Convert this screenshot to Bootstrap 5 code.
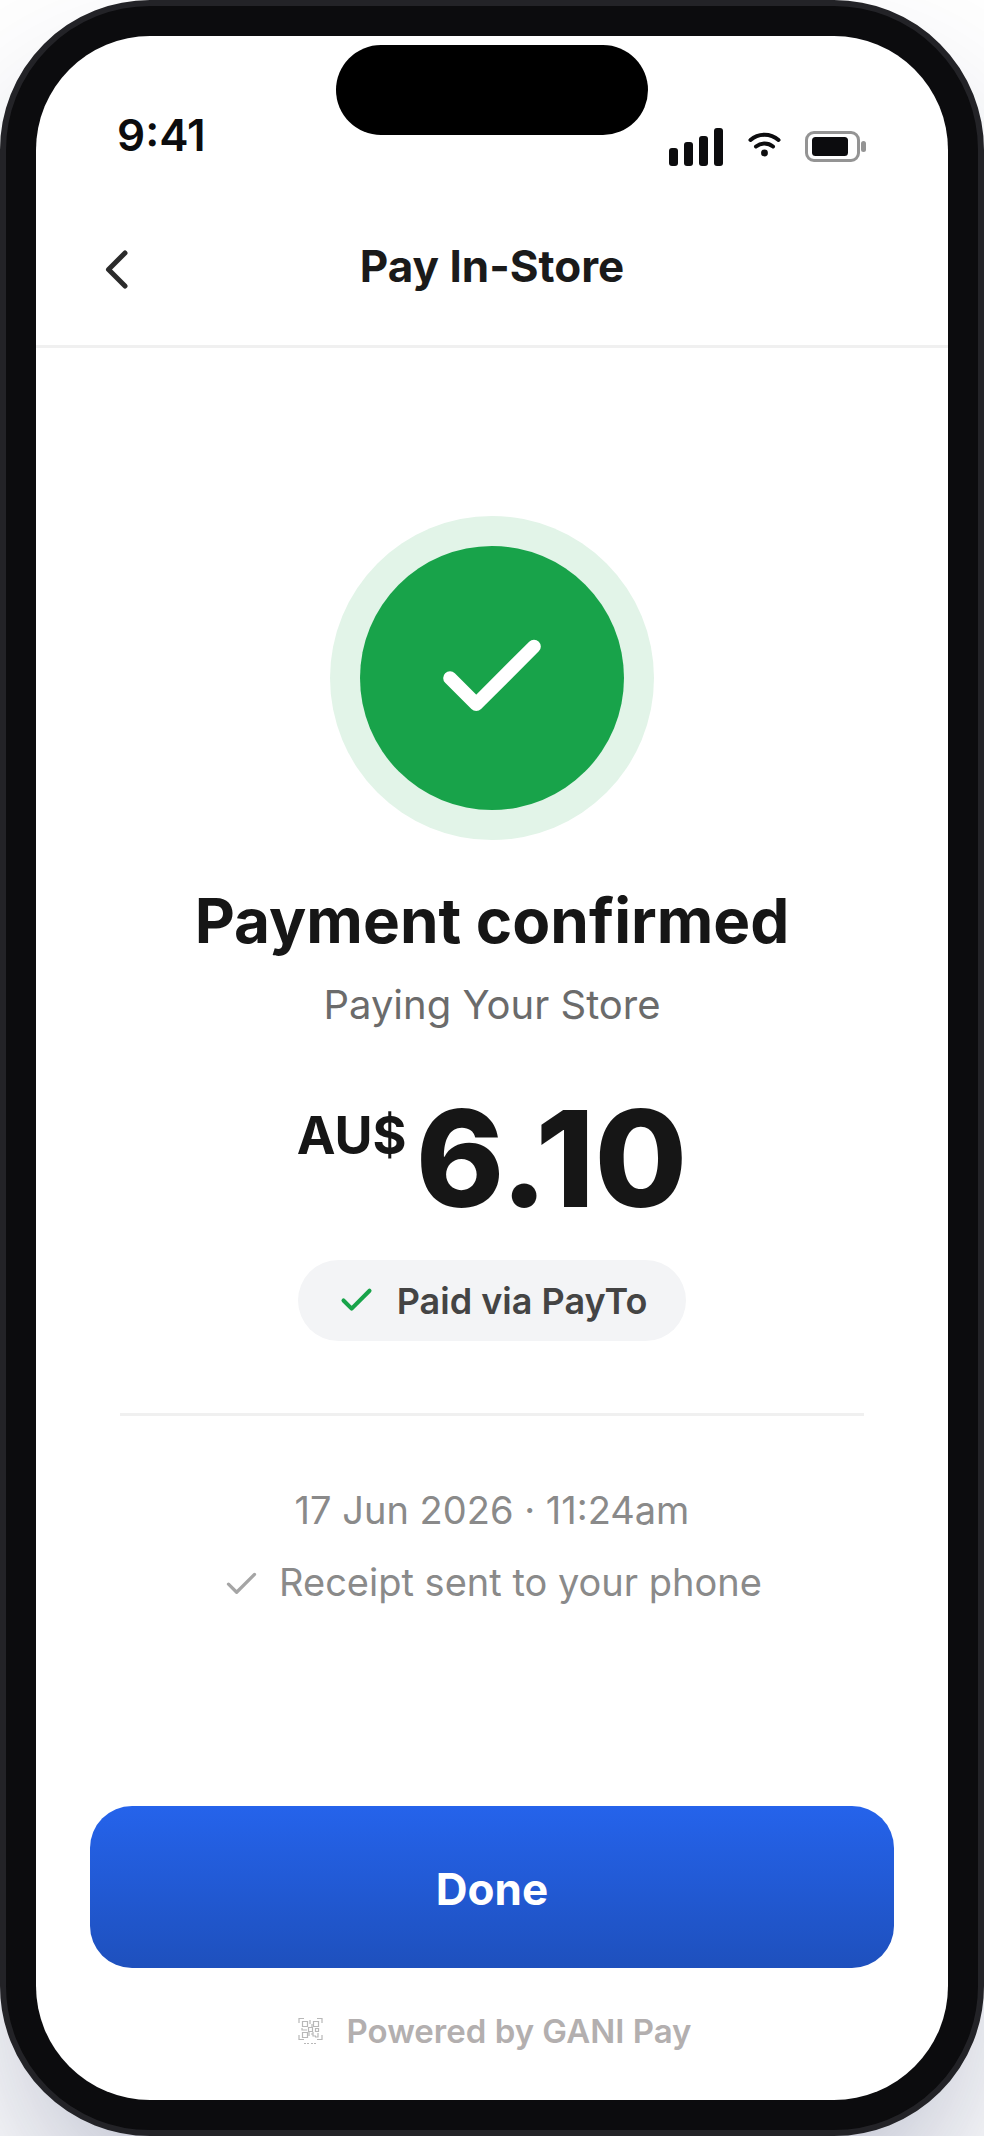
<!DOCTYPE html>
<html lang="en">
<head>
<meta charset="utf-8">
<meta name="viewport" content="width=device-width, initial-scale=1">
<title>Pay In-Store</title>
<link href="https://cdn.jsdelivr.net/npm/bootstrap@5.3.0/dist/css/bootstrap.min.css" rel="stylesheet">
<style>
  body { font-family: Inter, "Liberation Sans", sans-serif; background: #fff; color: #161616; overflow-x: hidden; }
  .phone { min-height: 100vh; border: 6px solid #232327; border-radius: 150px; background: #0c0c0e; padding: 30px; box-shadow: 0 90px 180px -36px rgba(16, 30, 80, .35); }
  .screen { background: #fff; border-radius: 114px; }
  .island { width: 312px; height: 90px; border-radius: 45px; background: #000; top: 9px; }
  .status { padding: 68px 81px 0; color: #0c0c0e; }
  .clock { font-size: 44px; line-height: 62px; font-weight: 600; }
  .wifi { margin: 0 23px; }
  .titlebar { padding: 70px 66px 49px; border-bottom: 3px solid #f0f0f0; }
  .titlebar h1 { font-size: 44px; line-height: 60px; font-weight: 700; color: #1a1a1a; }
  .back { left: 60px; color: #2b2b2b; line-height: 0; }
  .receipt { padding: 168px 84px 60px; }
  .ring { padding: 30px; background: #e2f4e8; }
  .disc { width: 264px; height: 264px; background: #18a34a; }
  .headline { font-size: 62px; line-height: 80px; font-weight: 700; margin-top: 41px; }
  .payee { font-size: 40px; line-height: 52px; color: #6b6b6b; margin-top: 18px; }
  .amount { margin-top: 61px; gap: 9px; font-weight: 700; line-height: 132px; }
  .currency { font-size: 52px; line-height: 60px; padding-top: 14px; }
  .value { font-size: 134px; font-weight: 800; }
  .method { margin-top: 36px; height: 81px; padding: 0 39px; gap: 21px; background: #f3f4f6; color: #444; font-size: 36px; font-weight: 600; }
  .rule { height: 3px; background: #f0f0f0; margin: 72px 0 66px; }
  .detail { font-size: 38px; line-height: 56px; color: #8a8a8a; gap: 18px; }
  .detail + .detail { margin-top: 16px; }
  .actions { padding: 0 54px 48px; }
  .btn-done { height: 162px; border: 0; border-radius: 42px; padding: 4px 0 0; background: linear-gradient(180deg, #2563eb, #1e50bd); color: #fff; font-size: 44px; font-weight: 700; }
  .powered { margin-top: 42px; font-size: 33px; line-height: 42px; font-weight: 600; color: #b3afaf; gap: 18px; }
</style>
</head>
<body>
<div class="phone d-flex">
  <div class="screen flex-grow-1 d-flex flex-column position-relative">
    <div class="island position-absolute start-50 translate-middle-x"></div>

    <div class="status d-flex justify-content-between align-items-end">
      <span class="clock">9:41</span>
      <div class="d-flex">
        <svg width="54" height="38" viewBox="0 0 54 38" fill="currentColor" aria-hidden="true"><rect y="20" width="9" height="18" rx="3"/><rect x="15" y="14" width="9" height="24" rx="3"/><rect x="30" y="8" width="9" height="30" rx="3"/><rect x="45" width="9" height="38" rx="3"/></svg>
        <svg class="wifi" width="36" height="38" viewBox="0 0 36 38" fill="none" stroke="currentColor" stroke-width="4" stroke-linecap="round" aria-hidden="true"><path d="M4.500 12C12.500 5 24.500 5 32.500 12M10 18.500C15 14.500 22 14.500 27 18.500"/><circle cx="18.500" cy="25" r="3.400" fill="currentColor" stroke="none"/></svg>
        <svg width="62" height="38" viewBox="0 0 62 38" aria-hidden="true"><rect x="1.500" y="4.500" width="52" height="28" rx="7.500" fill="none" stroke="#949494" stroke-width="3"/><rect x="7" y="9" width="36" height="19" rx="3.500" fill="#0c0c0e"/><rect x="56" y="13" width="5" height="11" rx="2.500" fill="#949494"/></svg>
      </div>
    </div>

    <header class="titlebar position-relative d-flex align-items-center justify-content-center">
      <button class="back btn p-0 border-0 position-absolute" type="button" aria-label="Back">
        <svg width="42" height="66" viewBox="0 0 42 66" fill="none" stroke="currentColor" stroke-width="5" stroke-linecap="round" stroke-linejoin="round"><path d="M29 20 12.500 36.500 29 53"/></svg>
      </button>
      <h1 class="m-0">Pay In-Store</h1>
    </header>

    <main class="receipt flex-grow-1 d-flex flex-column align-items-center text-center">
      <div class="ring rounded-circle">
        <div class="disc rounded-circle d-flex align-items-center justify-content-center">
          <svg width="126" height="126" viewBox="0 0 24 24" fill="none" stroke="#fff" stroke-width="2.600" stroke-linecap="round" stroke-linejoin="round" aria-hidden="true"><path d="M20 6 9 17l-5-5"/></svg>
        </div>
      </div>
      <h2 class="headline mb-0">Payment confirmed</h2>
      <p class="payee mb-0">Paying Your Store</p>
      <div class="amount d-flex align-items-start"><span class="currency">AU$</span><span class="value">6.10</span></div>
      <div class="method rounded-pill d-flex align-items-center">
        <svg width="39" height="39" viewBox="0 0 24 24" fill="none" stroke="#18a34a" stroke-width="2.500" stroke-linecap="round" stroke-linejoin="round" aria-hidden="true"><path d="M20 6 9 17l-5-5"/></svg>
        <span>Paid via PayTo</span>
      </div>
      <div class="rule align-self-stretch"></div>
      <div class="detail">17 Jun 2026 · 11:24am</div>
      <div class="detail d-flex align-items-center">
        <svg width="39" height="39" viewBox="0 0 24 24" fill="none" stroke="#a5a5a5" stroke-width="2" stroke-linecap="round" stroke-linejoin="round" aria-hidden="true"><path d="M20 7 9 18l-5-5"/></svg>
        <span>Receipt sent to your phone</span>
      </div>
    </main>

    <footer class="actions">
      <button type="button" class="btn btn-done w-100">Done</button>
      <div class="powered d-flex align-items-center justify-content-center">
        <svg width="36" height="36" viewBox="0 0 36 36" fill="none" stroke="#b8b8b8" stroke-width="1.200" aria-hidden="true">
          <path d="M6 10V5.500H11M24 5.500H29V10M6 22V26.500H11M24 26.500H29V22"/>
          <path d="M9.500 8.500h5v5h-5zM20.500 8.500h5v5h-5zM9.500 19.500h5v5h-5zM15.500 14.500h4v4h-4zM22.500 15.500h3v3h-3z"/>
          <path d="M17 7v4M19 11v3M9 15v2h5M16 19v4M18 21h2M20 19v4h3M25 20v4h-3"/>
          <path d="M11 30.500h6M18 30.500h6" stroke-dasharray="2 1"/>
        </svg>
        <span>Powered by GANI Pay</span>
      </div>
    </footer>
  </div>
</div>
<script src="https://cdn.jsdelivr.net/npm/bootstrap@5.3.0/dist/js/bootstrap.bundle.min.js"></script>
</body>
</html>
